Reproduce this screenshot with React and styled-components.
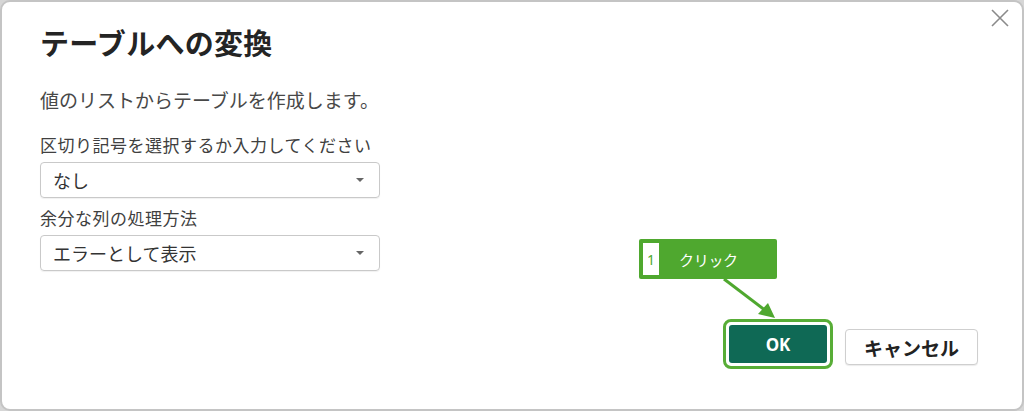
import React from 'react'
import styled, { createGlobalStyle } from 'styled-components'

const GlobalStyle = createGlobalStyle`
  html, body {
    margin: 0;
    padding: 0;
    background: #d6d6d6;
  }
  body {
    font-family: "Noto Sans CJK JP", "Noto Sans", sans-serif;
  }
`

const Dialog = styled.div`
  position: relative;
  box-sizing: border-box;
  width: 1024px;
  height: 411px;
  background: #ffffff;
  border: 2px solid #c4c4c4;
  border-radius: 10px;
  padding: 21px 44px 40px 38px;
  display: flex;
  flex-direction: column;
`

const CloseButton = styled.button`
  position: absolute;
  top: 4px;
  right: 10px;
  width: 24px;
  height: 24px;
  padding: 0;
  border: none;
  background: transparent;
  display: flex;
  align-items: center;
  justify-content: center;
`

const Title = styled.h1`
  margin: 0;
  font-size: 29px;
  line-height: 38px;
  font-weight: 700;
  color: #242424;
  letter-spacing: 0.3px;
`

const Description = styled.p`
  margin: 26px 0 0;
  font-size: 19px;
  line-height: 26px;
  color: #484848;
`

const Field = styled.div`
  display: flex;
  flex-direction: column;
  margin-top: ${p => p.gap}px;
`

const Label = styled.label`
  font-size: 17px;
  line-height: 24px;
  color: #404040;
  letter-spacing: 0.5px;
`

const Select = styled.div`
  box-sizing: border-box;
  margin-top: 5px;
  width: 340px;
  height: 36px;
  border: 1px solid #c9c9c9;
  border-radius: 4px;
  padding: 0 12px 0 12px;
  display: flex;
  align-items: center;
  justify-content: space-between;
  font-size: 18px;
  color: #333333;
  box-shadow: 0 1px 1px rgba(0, 0, 0, 0.06);
`

const Caret = styled.span`
  width: 0;
  height: 0;
  margin-right: 3px;
  border-left: 4px solid transparent;
  border-right: 4px solid transparent;
  border-top: 4px solid #666666;
`

const Footer = styled.div`
  margin-top: auto;
  display: flex;
  justify-content: flex-end;
  align-items: center;
  gap: 12px;
`

const Highlight = styled.div`
  border: 3px solid #58ad37;
  border-radius: 8px;
  padding: 3px;
  display: flex;
`

const PrimaryButton = styled.button`
  width: 98px;
  height: 38px;
  border: none;
  border-radius: 3px;
  background: #0f6955;
  color: #ffffff;
  font-family: "Noto Sans", "Noto Sans CJK JP", sans-serif;
  font-weight: 700;
  font-size: 17px;
`

const SecondaryButton = styled.button`
  box-sizing: border-box;
  width: 133px;
  height: 36px;
  margin-top: 6px;
  border: 1px solid #cfcfcf;
  border-radius: 4px;
  background: #ffffff;
  color: #222222;
  font-family: "Noto Sans CJK JP", sans-serif;
  font-weight: 700;
  font-size: 19px;
  box-shadow: 0 1px 1px rgba(0, 0, 0, 0.08);
`

const Callout = styled.div`
  position: absolute;
  left: 637px;
  top: 237px;
  width: 138px;
  height: 40px;
  box-sizing: border-box;
  background: #4fa82f;
  border-radius: 2px;
  padding: 4px;
  display: flex;
  align-items: center;
  gap: 20px;
`

const StepNumber = styled.span`
  width: 16px;
  height: 32px;
  background: #ffffff;
  color: #4fa82f;
  font-family: "Noto Sans", sans-serif;
  font-size: 14px;
  display: flex;
  align-items: center;
  justify-content: center;
`

const CalloutText = styled.span`
  color: #ffffff;
  font-size: 15px;
  letter-spacing: -0.3px;
`

const Arrow = styled.svg`
  position: absolute;
  left: 718px;
  top: 276px;
  overflow: visible;
`

const App = () => {
  return (
    <>
      <GlobalStyle />
      <Dialog>
        <CloseButton aria-label="閉じる">
          <svg width="18" height="18" viewBox="0 0 18 18">
            <path d="M1 1 L17 17 M17 1 L1 17" stroke="#8a8a8a" strokeWidth="1.6" fill="none" />
          </svg>
        </CloseButton>
        <Title>テーブルへの変換</Title>
        <Description>値のリストからテーブルを作成します。</Description>
        <Field gap={20}>
          <Label>区切り記号を選択するか入力してください</Label>
          <Select>
            <span>なし</span>
            <Caret />
          </Select>
        </Field>
        <Field gap={8}>
          <Label>余分な列の処理方法</Label>
          <Select>
            <span>エラーとして表示</span>
            <Caret />
          </Select>
        </Field>
        <Footer>
          <Highlight>
            <PrimaryButton>OK</PrimaryButton>
          </Highlight>
          <SecondaryButton>キャンセル</SecondaryButton>
        </Footer>
        <Callout>
          <StepNumber>1</StepNumber>
          <CalloutText>クリック</CalloutText>
        </Callout>
        <Arrow width="60" height="44" viewBox="0 0 60 44">
          <path d="M4 1 L46 33" stroke="#4fa82f" strokeWidth="3" fill="none" />
          <path d="M55 40 L38 36 L48 25 Z" fill="#4fa82f" />
        </Arrow>
      </Dialog>
    </>
  )
}

export default App
